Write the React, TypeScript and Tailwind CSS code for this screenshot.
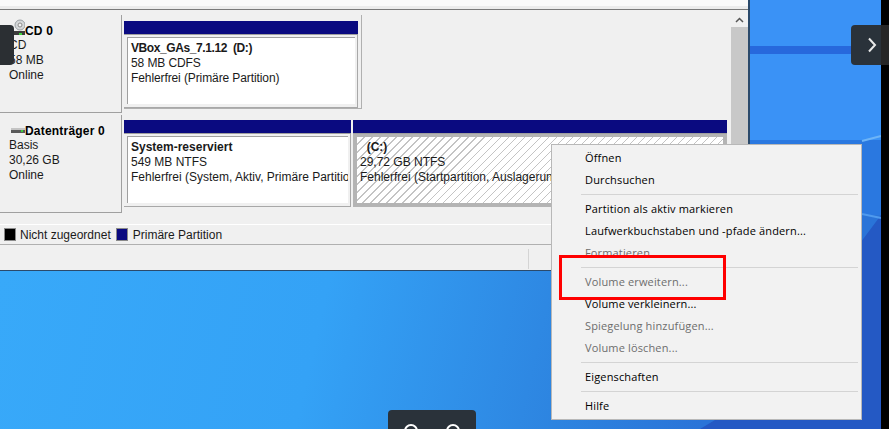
const disabled = "text-[#6d6d6d]";

function MenuItem({ label, off }: { label: string; off?: boolean }) {
  return (
    <div className={`h-[22px] pl-[33px] leading-[22px] tracking-[0.15px] whitespace-nowrap ${off ? disabled : "text-black"}`}>
      {label}
    </div>
  );
}

function MenuSep() {
  return <div className="my-[3px] ml-[29px] mr-[3px] h-px bg-[#d4d4d4]" />;
}

function DiskIcon() {
  return (
    <svg width="15" height="8" viewBox="0 0 15 8" className="shrink-0">
      <rect x="1" y="1" width="14" height="5" fill="#5a5a5a" />
      <rect x="1" y="1" width="14" height="2" fill="#c4c4c4" />
      <rect x="11" y="3" width="2" height="2" fill="#3ad13a" />
    </svg>
  );
}

function CdIcon() {
  return (
    <svg width="15" height="19" viewBox="0 0 15 19" className="mt-[-5px] shrink-0">
      <circle cx="10" cy="6" r="5" fill="#d5d8da" stroke="#9aa0a4" />
      <circle cx="10" cy="6" r="2" fill="#f4f4f4" stroke="#8b8b8b" />
      <rect x="3" y="12" width="12" height="4" fill="#3c3c3c" />
      <rect x="9" y="14" width="3" height="2" fill="#3ad13a" />
    </svg>
  );
}

function DiskLabel({ icon, title, lines }: { icon: React.ReactNode; title: string; lines: string[] }) {
  return (
    <div className="h-[98px] w-[122px] shrink-0 border-b border-r border-[#a0a0a0] bg-[#f0f0f0] pl-[9px] pt-[8px]">
      <div className="ml-px flex h-[15px] items-center font-bold tracking-[0.2px] text-black">
        {icon}
        <span>{title}</span>
      </div>
      {lines.map((line) => (
        <div key={line} className="h-[15px] leading-[15px]">
          {line}
        </div>
      ))}
    </div>
  );
}

function Partition({
  width,
  title,
  lines,
  titleClass = "",
  lineClass = "",
  hatched,
}: {
  width: string;
  title: string;
  lines: string[];
  titleClass?: string;
  lineClass?: string;
  hatched?: boolean;
}) {
  return (
    <div className={`flex shrink-0 flex-col ${width}`}>
      <div className="h-[14px] border-b border-[#a0a0a0] bg-[#0a0a80]" />
      <div
        className={`h-[73px] ${
          hatched
            ? "bg-[#b4b4b4] pb-[4px] pl-[4px] pr-[4px] pt-[3px]"
            : "border-b border-r border-[#a8a8a8] bg-[#f0f0f0] pb-[3px] pl-[3px] pr-[2px] pt-[2px]"
        }`}
      >
        <div
          className={`h-full overflow-hidden whitespace-nowrap pl-[3px] leading-[15px] ${
            hatched
              ? "bg-[repeating-linear-gradient(135deg,#ffffff_0,#ffffff_4.9px,#c4c4c4_4.9px,#c4c4c4_5.66px)] pt-[3px]"
              : "border-l border-t border-[#a0a0a0] bg-white pt-[3px]"
          }`}
        >
          <div className={`whitespace-pre font-bold ${titleClass}`}>{title}</div>
          {lines.map((line) => (
            <div key={line} className={lineClass}>
              {line}
            </div>
          ))}
        </div>
      </div>
    </div>
  );
}

function Wallpaper() {
  return (
    <svg width="889" height="429" viewBox="0 0 889 429" className="absolute left-0 top-0">
      <defs>
        <linearGradient id="wall" gradientUnits="userSpaceOnUse" x1="0" y1="270" x2="700" y2="429">
          <stop offset="0" stopColor="#38a9f9" />
          <stop offset="0.45" stopColor="#34a2f6" />
          <stop offset="0.8" stopColor="#2d84e0" />
          <stop offset="1" stopColor="#2a74d8" />
        </linearGradient>
      </defs>
      <rect width="889" height="429" fill="url(#wall)" />
      <rect x="748" y="0" width="133" height="140" fill="#3a92f6" />
      <rect x="748" y="46" width="133" height="8" fill="#2768dc" />
      <rect x="748" y="140" width="133" height="75" fill="#2a78e0" />
      <path d="M700 429 L740 405 L881 215 L881 429 Z" fill="#2459c4" />
      <path d="M862 141 L881 136" stroke="#6db4f7" strokeWidth="2" />
      <path d="M862 214 L881 218" stroke="#4f9aee" strokeWidth="2" />
      <rect x="881" y="0" width="8" height="429" fill="#000000" />
    </svg>
  );
}

export default function App() {
  return (
    <div className="relative h-[429px] w-[889px] overflow-hidden font-['Liberation_Sans',sans-serif] text-[12px] text-[#1a1a1a]">
      <Wallpaper />

      {/* disk management window */}
      <div className="relative flex h-[271px] w-[750px] flex-col border-b border-r-2 border-[#2b4a6b] bg-[#f0f0f0]">
        <div className="h-[6px] bg-[#fafafa]" />
        <div className="h-[3px] bg-[#ececec]" />
        <div className="h-[1px] bg-[#7a7a7a]" />

        <div className="flex h-[215px] border-b border-white">
          <div className="flex w-[731px] flex-col gap-[2px] pt-[5px]">
            <div className="flex">
              <DiskLabel icon={<CdIcon />} title="CD 0" lines={["CD", "58 MB", "Online"]} />
              <div className="ml-[2px] h-[94px] w-[238px] border-b border-r border-[#b0b0b0] pt-[6px]">
                <Partition
                  width="w-[234px]"
                  title="VBox_GAs_7.1.12  (D:)"
                  titleClass="tracking-[-0.4px]"
                  lineClass="tracking-[-0.1px]"
                  lines={["58 MB CDFS", "Fehlerfrei (Primäre Partition)"]}
                />
              </div>
            </div>
            <div className="flex">
              <DiskLabel icon={<DiskIcon />} title="Datenträger 0" lines={["Basis", "30,26 GB", "Online"]} />
              <div className="ml-[2px] flex gap-[2px] pt-[5px]">
                <Partition
                  width="w-[227px]"
                  title="System-reserviert"
                  lines={["549 MB NTFS", "Fehlerfrei (System, Aktiv, Primäre Partition)"]}
                />
                <Partition
                  width="w-[374px]"
                  hatched
                  title="  (C:)"
                  lines={["29,72 GB NTFS", "Fehlerfrei (Startpartition, Auslagerungsdatei)"]}
                />
              </div>
            </div>
          </div>
          <div className="flex w-[17px] flex-col items-center bg-[#f0f0f0]">
            <svg width="9" height="6" viewBox="0 0 9 6" className="mb-[4px] mt-[7px]">
              <path d="M1 5 L4.5 1.5 L8 5" fill="none" stroke="#555" strokeWidth="1.5" />
            </svg>
            <div className="h-[130px] w-full bg-[#c8c8c8]" />
          </div>
        </div>

        {/* legend */}
        <div className="flex h-[19px] items-center pl-[4px]">
          <span className="h-[13px] w-[12px] border border-[#8a8a8a] bg-black" />
          <span className="ml-[4px]">Nicht zugeordnet</span>
          <span className="ml-[5px] h-[13px] w-[12px] border border-[#8a8a8a] bg-[#0a0a80]" />
          <span className="ml-[5px]">Primäre Partition</span>
        </div>

        {/* status bar */}
        <div className="flex flex-1 border-t border-[#b0b0b0]">
          <div className="ml-[528px] mt-[4px] h-[20px] w-px bg-[#d4d4d4]" />
        </div>
      </div>

      {/* context menu */}
      <div className="absolute left-[551px] top-[144px] h-[276px] w-[311px] border border-[#b8b8b8] bg-[#f2f2f2] pt-[2px] font-['Open_Sans',sans-serif] text-[11px]">
        <MenuItem label="Öffnen" />
        <MenuItem label="Durchsuchen" />
        <MenuSep />
        <MenuItem label="Partition als aktiv markieren" />
        <MenuItem label="Laufwerkbuchstaben und -pfade ändern..." />
        <MenuItem label="Formatieren" off />
        <MenuSep />
        <MenuItem label="Volume erweitern..." off />
        <MenuItem label="Volume verkleinern..." />
        <MenuItem label="Spiegelung hinzufügen..." off />
        <MenuItem label="Volume löschen..." off />
        <MenuSep />
        <MenuItem label="Eigenschaften" />
        <MenuSep />
        <MenuItem label="Hilfe" />
      </div>

      {/* red annotation */}
      <div className="absolute left-[559px] top-[255px] h-[45px] w-[167px] border-[3px] border-[#ff0000]" />

      {/* viewer controls */}
      <div className="absolute left-0 top-[25px] h-[40px] w-[14px] rounded-r-[4px] bg-[#2b2f33]" />
      <div className="absolute left-[851px] top-[25px] flex h-[40px] w-[38px] items-center justify-center overflow-hidden rounded-l-[4px] bg-[#2a323a] pl-[4px]">
        <span className="absolute bottom-0 right-0 top-0 w-[8px] bg-[#262626]" />
        <svg width="10" height="16" viewBox="0 0 10 16" className="relative">
          <path d="M2 1.5 L8 8 L2 14.5" fill="none" stroke="#e8e8e8" strokeWidth="2" />
        </svg>
      </div>
      <div className="absolute left-[388px] top-[410px] flex h-[19px] w-[88px] justify-center gap-[28px] rounded-t-[4px] bg-[#2a323a] pt-[14px]">
        <span className="h-[14px] w-[14px] rounded-full border-2 border-white" />
        <span className="h-[14px] w-[14px] rounded-full border-2 border-white" />
      </div>
    </div>
  );
}
